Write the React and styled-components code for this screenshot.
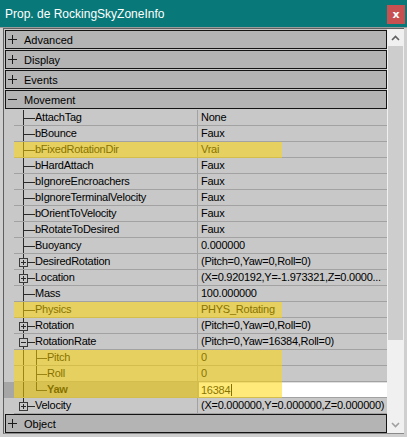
import React from 'react'
import styled, { createGlobalStyle } from 'styled-components'

const GlobalStyle = createGlobalStyle`
  body {
    margin: 0;
    font-family: "Liberation Sans", Arial, sans-serif;
  }
`

const Window = styled.div`
  width: 407px;
  height: 437px;
  display: flex;
  flex-direction: column;
  background: #cfcfcf;
  overflow: hidden;
`

const TitleBar = styled.div`
  height: 27px;
  flex: none;
  display: flex;
  align-items: center;
  justify-content: space-between;
  padding: 0 2px 0 5px;
  background: #087878;
`

const Title = styled.span`
  color: #ffffff;
  font-size: 12px;
  font-family: "Liberation Sans", Arial, sans-serif;
`

const CloseButton = styled.div`
  width: 18px;
  height: 19px;
  margin-top: 1px;
  display: flex;
  align-items: center;
  justify-content: center;
  background: #c75050;
  color: #fff;
  font-weight: bold;
  font-size: 11px;
  font-family: "DejaVu Sans", sans-serif;
`

const Body = styled.div`
  flex: 1;
  display: flex;
  flex-direction: column;
  border-top: 1px solid #9c9c9c;
  padding: 0 3px 3px 3px;
  min-height: 0;
`

const Pane = styled.div`
  flex: 1;
  display: flex;
  min-height: 0;
  border-top: 1px solid #5f5f5f;
  border-left: 1px solid #5f5f5f;
  border-bottom: 1px solid #8a8a8a;
`

const List = styled.div`
  flex: 1;
  display: flex;
  flex-direction: column;
  padding-top: 1px;
  background: #c8c8c8;
  overflow: hidden;
`

const Category = styled.div`
  height: 19px;
  flex: none;
  box-sizing: border-box;
  margin: 0 0 1px 1px;
  display: flex;
  align-items: center;
  gap: 7px;
  padding-left: 2px;
  background: #b4b4b4;
  border: 1px solid #141414;
  font-size: 11px;
  color: #000;
`

const Row = styled.div`
  position: relative;
  height: 16px;
  flex: none;
  display: grid;
  grid-template-columns: 10px 184px 1fr;
  background: ${p => (p.$selected ? '#a6a6a6' : '#c8c8c8')};
  font-size: 11px;
  letter-spacing: -0.25px;
  line-height: 15px;
  color: #000;
`

const NameCell = styled.div`
  display: flex;
  align-items: flex-start;
  border-bottom: 1px solid #a2a2a2;
  border-right: 1px solid #a2a2a2;
  background: ${p => (p.$selected ? '#acacac' : 'transparent')};
  white-space: nowrap;
  overflow: hidden;
  font-weight: ${p => (p.$bold ? 'bold' : 'normal')};
`

const Guides = styled.svg`
  flex: none;
  height: 16px;
  display: block;
  margin-bottom: -1px;
`

const ValueCell = styled.div`
  padding-left: 3px;
  border-bottom: 1px solid #a2a2a2;
  white-space: nowrap;
  overflow: hidden;
`

const EditBox = styled.div`
  height: 15px;
  margin-left: -2px;
  padding-left: 2px;
  background: #ffffff;
  border-top: 1px solid #e0e0e0;
  box-sizing: border-box;
  display: flex;
  align-items: center;
`

const Caret = styled.span`
  display: inline-block;
  width: 1px;
  height: 12px;
  background: #000;
  margin-left: 1px;
`

const Highlight = styled.span`
  position: absolute;
  left: 10px;
  top: 0;
  width: 268px;
  height: 16px;
  background: rgba(255, 214, 0, 0.52);
  pointer-events: none;
`

const Scrollbar = styled.div`
  width: 17px;
  flex: none;
  display: flex;
  flex-direction: column;
  background: #f0f0f0;
`

const ScrollArrow = styled.div`
  height: 17px;
  flex: none;
  display: flex;
  align-items: center;
  justify-content: center;
`

const Thumb = styled.div`
  height: 294px;
  margin: 0 1px;
  background: #cdcdcd;
`

const Track = styled.div`
  flex: 1;
`

const Sign = ({ open }) => (
  <svg width="9" height="9" viewBox="0 0 9 9" style={{ display: 'block' }}>
    <path d="M0 4.5H9" stroke="#1a1a1a" strokeWidth="1" />
    {!open && <path d="M4.5 0V9" stroke="#1a1a1a" strokeWidth="1" />}
  </svg>
)

const LINE = '#2a2a2a'

// connectors to the left of a property name
const Tree = ({ depth, last, childLast, expander }) => {
  const w = depth === 1 ? 21 : 33
  return (
    <Guides width={w} viewBox={`0 0 ${w} 16`}>
      {depth === 1 && (
        <>
          {expander ? (
            <>
              <path d="M9.5 0V4" stroke={LINE} />
              {!last && <path d="M9.5 13V16" stroke={LINE} />}
              <rect x="5.5" y="4.5" width="8" height="8" fill="none" stroke="#3a3a3a" />
              <path d="M7 8.5H12" stroke={LINE} />
              {expander === 'plus' && <path d="M9.5 6V11" stroke={LINE} />}
              <path d="M13 8.5H21" stroke={LINE} />
            </>
          ) : (
            <>
              <path d={last ? 'M9.5 0V8.5' : 'M9.5 0V16'} stroke={LINE} />
              <path d="M9 8.5H21" stroke={LINE} />
            </>
          )}
        </>
      )}
      {depth === 2 && (
        <>
          <path d="M9.5 0V16" stroke={LINE} />
          <path d={childLast ? 'M22.5 0V8.5' : 'M22.5 0V16'} stroke={LINE} />
          <path d="M22 8.5H33" stroke={LINE} />
        </>
      )}
    </Guides>
  )
}

const props = [
  { name: 'AttachTag', value: 'None' },
  { name: 'bBounce', value: 'Faux' },
  { name: 'bFixedRotationDir', value: 'Vrai', mark: true },
  { name: 'bHardAttach', value: 'Faux' },
  { name: 'bIgnoreEncroachers', value: 'Faux' },
  { name: 'bIgnoreTerminalVelocity', value: 'Faux' },
  { name: 'bOrientToVelocity', value: 'Faux' },
  { name: 'bRotateToDesired', value: 'Faux' },
  { name: 'Buoyancy', value: '0.000000' },
  { name: 'DesiredRotation', value: '(Pitch=0,Yaw=0,Roll=0)', expander: 'plus' },
  { name: 'Location', value: '(X=0.920192,Y=-1.973321,Z=0.0000...', expander: 'plus' },
  { name: 'Mass', value: '100.000000' },
  { name: 'Physics', value: 'PHYS_Rotating', mark: true },
  { name: 'Rotation', value: '(Pitch=0,Yaw=0,Roll=0)', expander: 'plus' },
  { name: 'RotationRate', value: '(Pitch=0,Yaw=16384,Roll=0)', expander: 'minus' },
  { name: 'Pitch', value: '0', depth: 2, mark: true },
  { name: 'Roll', value: '0', depth: 2, mark: true },
  { name: 'Yaw', value: '16384', depth: 2, mark: true, selected: true, childLast: true },
  { name: 'Velocity', value: '(X=0.000000,Y=0.000000,Z=0.000000)', expander: 'plus', last: true },
]

const PropRow = ({ p }) => (
  <Row $selected={p.selected}>
    <span />
    <NameCell $selected={p.selected} $bold={p.selected}>
      <Tree depth={p.depth || 1} last={p.last} childLast={p.childLast} expander={p.expander} />
      {p.name}
    </NameCell>
    <ValueCell>
      {p.selected ? (
        <EditBox>
          {p.value}
          <Caret />
        </EditBox>
      ) : (
        p.value
      )}
    </ValueCell>
    {p.mark && <Highlight />}
  </Row>
)

const App = () => {
  return (
    <Window>
      <GlobalStyle />
      <TitleBar>
        <Title>Prop. de RockingSkyZoneInfo</Title>
        <CloseButton>x</CloseButton>
      </TitleBar>
      <Body>
        <Pane>
          <List>
            <Category><Sign /> Advanced</Category>
            <Category><Sign /> Display</Category>
            <Category><Sign /> Events</Category>
            <Category><Sign open /> Movement</Category>
            {props.map(p => <PropRow key={p.name} p={p} />)}
            <Category><Sign /> Object</Category>
          </List>
          <Scrollbar>
            <ScrollArrow>
              <svg width="9" height="6" viewBox="0 0 9 6">
                <path d="M1 5L4.5 1.5L8 5" fill="none" stroke="#606060" strokeWidth="1.6" />
              </svg>
            </ScrollArrow>
            <Thumb />
            <Track />
            <ScrollArrow>
              <svg width="9" height="6" viewBox="0 0 9 6">
                <path d="M1 1L4.5 4.5L8 1" fill="none" stroke="#a0a0a0" strokeWidth="1.6" />
              </svg>
            </ScrollArrow>
          </Scrollbar>
        </Pane>
      </Body>
    </Window>
  )
}

export default App
